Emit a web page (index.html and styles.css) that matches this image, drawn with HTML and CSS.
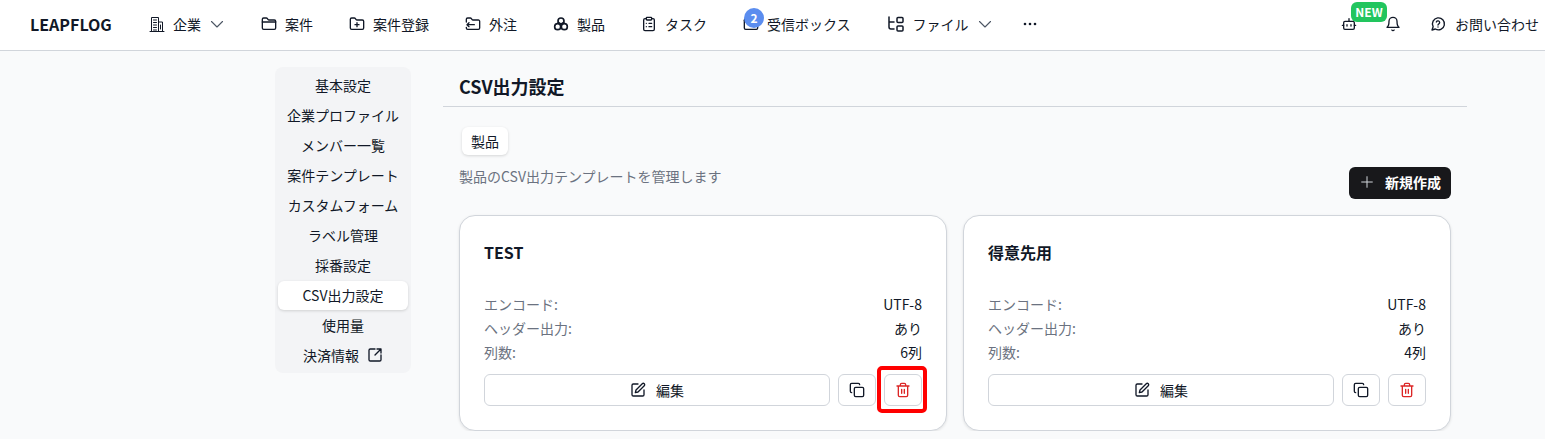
FILE: index.html
```html
<!DOCTYPE html>
<html lang="ja">
<head>
    <meta charset="UTF-8">
    <title>CSV出力設定</title>
    <link rel="stylesheet" href="styles.css">
</head>
<body>
    <header class="topbar">
        <div class="logo">LEAPFLOG</div>
        <nav class="nav">
            <a class="nav-item">
                <svg class="icon thin" viewBox="0 0 16 16"><path d="M1 15.500h14M2.500 15.500V1.500h7v14M9.500 6h4v9.500M4.500 4h3M4.500 6.500h3M4.500 9h3M4.500 11.500h3M4.500 14h3M11.500 9v4"/></svg>
                <span>企業</span>
                <svg class="icon chevron" viewBox="0 0 16 16"><path d="M2.500 5.500 8 11l5.500-5.500"/></svg>
            </a>
            <a class="nav-item">
                <svg class="icon" viewBox="0 0 24 24"><path d="M20 20a2 2 0 0 0 2-2V8a2 2 0 0 0-2-2h-7.900a2 2 0 0 1-1.700-.9l-.8-1.200A2 2 0 0 0 7.900 3H4a2 2 0 0 0-2 2v13a2 2 0 0 0 2 2Z"/><path d="M2 9h20"/></svg>
                <span>案件</span>
            </a>
            <a class="nav-item">
                <svg class="icon" viewBox="0 0 24 24"><path d="M20 20a2 2 0 0 0 2-2V8a2 2 0 0 0-2-2h-7.900a2 2 0 0 1-1.700-.9l-.8-1.200A2 2 0 0 0 7.900 3H4a2 2 0 0 0-2 2v13a2 2 0 0 0 2 2Z"/><path d="M12 10v6M9 13h6"/></svg>
                <span>案件登録</span>
            </a>
            <a class="nav-item">
                <svg class="icon" viewBox="0 0 24 24"><path d="M2 9V5a2 2 0 0 1 2-2h3.900a2 2 0 0 1 1.700.9l.8 1.200a2 2 0 0 0 1.700.9H20a2 2 0 0 1 2 2v10a2 2 0 0 1-2 2H4a2 2 0 0 1-2-2v-1"/><path d="M14 13H3M6 10l-3 3 3 3"/></svg>
                <span>外注</span>
            </a>
            <a class="nav-item">
                <svg class="icon heavy" viewBox="0 0 24 24"><circle cx="12" cy="7.500" r="4.500"/><circle cx="7" cy="16" r="4.500"/><circle cx="17" cy="16" r="4.500"/><path d="M12 12v4M8 10l4 2 4-2"/></svg>
                <span>製品</span>
            </a>
            <a class="nav-item">
                <svg class="icon" viewBox="0 0 24 24"><rect x="8" y="2" width="8" height="4" rx="1"/><path d="M16 4h2a2 2 0 0 1 2 2v14a2 2 0 0 1-2 2H6a2 2 0 0 1-2-2V6a2 2 0 0 1 2-2h2M12 11h4M12 16h4M8 11h.010M8 16h.010"/></svg>
                <span>タスク</span>
            </a>
            <a class="nav-item inbox">
                <svg class="icon" viewBox="0 0 24 24"><rect x="2" y="4" width="20" height="16" rx="2"/><path d="m22 7-8.970 5.700a1.940 1.940 0 0 1-2.060 0L2 7"/></svg>
                <span>受信ボックス</span>
                <span class="count">2</span>
            </a>
            <a class="nav-item file-item">
                <svg class="icon file-icon" viewBox="0 0 18 16"><path d="M2 1v10a2 2 0 0 0 2 2h3M2 6h5"/><path d="M11 1.500h4a1 1 0 0 1 1 1v3a1 1 0 0 1-1 1h-4a1 1 0 0 1-1-1v-3a1 1 0 0 1 1-1ZM11 10h4a1 1 0 0 1 1 1v3a1 1 0 0 1-1 1h-4a1 1 0 0 1-1-1v-3a1 1 0 0 1 1-1Z"/></svg>
                <span>ファイル</span>
                <svg class="icon chevron" viewBox="0 0 16 16"><path d="M2.500 5.500 8 11l5.500-5.500"/></svg>
            </a>
            <a class="nav-item more">
                <svg class="icon" viewBox="0 0 16 16"><circle class="dot" cx="3" cy="8" r="1.300"/><circle class="dot" cx="8" cy="8" r="1.300"/><circle class="dot" cx="13" cy="8" r="1.300"/></svg>
            </a>
        </nav>
        <div class="top-right">
            <a class="bot">
                <svg class="icon" viewBox="0 0 24 24"><path d="M12 8V4"/><rect x="4" y="8" width="16" height="12" rx="2"/><path d="M2 14h2M20 14h2M15 13v2M9 13v2"/></svg>
                <span class="new-badge">NEW</span>
            </a>
            <a class="bell">
                <svg class="icon" viewBox="0 0 24 24"><path d="M10.300 21a1.940 1.940 0 0 0 3.400 0"/><path d="M6 8a6 6 0 0 1 12 0c0 7 3 9 3 9H3s3-2 3-9"/></svg>
            </a>
            <a class="help">
                <svg class="icon" viewBox="0 0 24 24"><path d="M3 21l1.700-5A9 9 0 1 1 8 19.500Z"/><path d="M9.500 9a2.600 2.600 0 0 1 5 .9c0 1.700-2.500 2.400-2.500 3.600M12 16.500h.010"/></svg>
                <span>お問い合わせ</span>
            </a>
        </div>
    </header>

    <div class="page">
        <aside class="sidebar">
            <a class="side-item">基本設定</a>
            <a class="side-item">企業プロファイル</a>
            <a class="side-item">メンバー一覧</a>
            <a class="side-item">案件テンプレート</a>
            <a class="side-item">カスタムフォーム</a>
            <a class="side-item">ラベル管理</a>
            <a class="side-item">採番設定</a>
            <a class="side-item active">CSV出力設定</a>
            <a class="side-item">使用量</a>
            <a class="side-item">決済情報
                <svg class="icon" viewBox="0 0 24 24"><path d="M12 3H5a2 2 0 0 0-2 2v14a2 2 0 0 0 2 2h14a2 2 0 0 0 2-2v-7"/><path d="M21 9V3h-6M21 3l-9 9"/></svg>
            </a>
        </aside>

        <main class="main">
            <h1 class="page-title">CSV出力設定</h1>
            <div class="content">
                <div class="tabs"><button class="tab">製品</button></div>
                <div class="toolbar">
                    <p class="desc">製品のCSV出力テンプレートを管理します</p>
                    <button class="btn-new">
                        <svg class="icon" viewBox="0 0 24 24"><path d="M12 4v16M4 12h16"/></svg>
                        新規作成
                    </button>
                </div>
                <div class="cards">
                    <section class="card">
                        <h2>TEST</h2>
                        <dl class="rows">
                            <div class="row"><dt>エンコード:</dt><dd>UTF-8</dd></div>
                            <div class="row"><dt>ヘッダー出力:</dt><dd>あり</dd></div>
                            <div class="row"><dt>列数:</dt><dd>6列</dd></div>
                        </dl>
                        <div class="actions">
                            <button class="btn btn-edit">
                                <svg class="icon" viewBox="0 0 24 24"><path d="M12 3H5a2 2 0 0 0-2 2v14a2 2 0 0 0 2 2h14a2 2 0 0 0 2-2v-7"/><path d="M18.400 2.600a2.100 2.100 0 1 1 3 3L12 15l-4 1 1-4Z"/></svg>
                                編集
                            </button>
                            <button class="btn btn-icon">
                                <svg class="icon" viewBox="0 0 24 24"><rect x="8" y="8" width="14" height="14" rx="2"/><path d="M4 16c-1.100 0-2-.9-2-2V4c0-1.100.9-2 2-2h10c1.100 0 2 .9 2 2"/></svg>
                            </button>
                            <button class="btn btn-icon danger marked">
                                <svg class="icon" viewBox="0 0 24 24"><path d="M3 6h18M19 6v14a2 2 0 0 1-2 2H7a2 2 0 0 1-2-2V6M8 6V4a2 2 0 0 1 2-2h4a2 2 0 0 1 2 2v2M10 11v6M14 11v6"/></svg>
                            </button>
                        </div>
                    </section>
                    <section class="card">
                        <h2>得意先用</h2>
                        <dl class="rows">
                            <div class="row"><dt>エンコード:</dt><dd>UTF-8</dd></div>
                            <div class="row"><dt>ヘッダー出力:</dt><dd>あり</dd></div>
                            <div class="row"><dt>列数:</dt><dd>4列</dd></div>
                        </dl>
                        <div class="actions">
                            <button class="btn btn-edit">
                                <svg class="icon" viewBox="0 0 24 24"><path d="M12 3H5a2 2 0 0 0-2 2v14a2 2 0 0 0 2 2h14a2 2 0 0 0 2-2v-7"/><path d="M18.400 2.600a2.100 2.100 0 1 1 3 3L12 15l-4 1 1-4Z"/></svg>
                                編集
                            </button>
                            <button class="btn btn-icon">
                                <svg class="icon" viewBox="0 0 24 24"><rect x="8" y="8" width="14" height="14" rx="2"/><path d="M4 16c-1.100 0-2-.9-2-2V4c0-1.100.9-2 2-2h10c1.100 0 2 .9 2 2"/></svg>
                            </button>
                            <button class="btn btn-icon danger">
                                <svg class="icon" viewBox="0 0 24 24"><path d="M3 6h18M19 6v14a2 2 0 0 1-2 2H7a2 2 0 0 1-2-2V6M8 6V4a2 2 0 0 1 2-2h4a2 2 0 0 1 2 2v2M10 11v6M14 11v6"/></svg>
                            </button>
                        </div>
                    </section>
                </div>
            </div>
        </main>
    </div>
</body>
</html>
```

FILE: styles.css
```css
/* Reset */
* {
    margin: 0;
    padding: 0;
    box-sizing: border-box;
}

body {
    font-family: "Noto Sans CJK JP", "Noto Sans", sans-serif;
    font-size: 14px;
    line-height: 20px;
    background: #f9fafb;
    color: #111827;
    overflow: hidden;
}

button {
    font: inherit;
    color: inherit;
    background: none;
    border: none;
}

/* Icons */
.icon {
    width: 16px;
    height: 16px;
    flex: none;
    fill: none;
    stroke: currentColor;
    stroke-width: 2;
    stroke-linecap: round;
    stroke-linejoin: round;
}

.icon.thin {
    stroke-width: 1;
}

.icon.heavy {
    stroke-width: 2.500;
}

.icon.chevron {
    stroke-width: 1.100;
    color: #4b5563;
}

.icon .dot {
    fill: currentColor;
    stroke: none;
}

/* Top bar */
.topbar {
    display: flex;
    align-items: center;
    height: 51px;
    padding: 0 6px 3px 30px;
    background: #fff;
    border-bottom: 1px solid #d1d5db;
}

.logo {
    font-weight: 700;
    font-size: 16px;
    width: 119px;
}

.nav {
    display: flex;
    align-items: center;
    gap: 36px;
}

.nav-item {
    position: relative;
    display: flex;
    align-items: center;
    gap: 8px;
    white-space: nowrap;
}

.count {
    position: absolute;
    left: 1px;
    top: -6px;
    width: 20px;
    height: 20px;
    border-radius: 50%;
    background: #5b8def;
    color: #fff;
    font-size: 12px;
    font-weight: 700;
    line-height: 20px;
    text-align: center;
}

.file-icon {
    width: 18px;
    stroke-width: 1.500;
}

.more {
    margin-left: -7px;
}

.top-right {
    display: flex;
    align-items: center;
    margin-left: auto;
}

.bot {
    position: relative;
    display: flex;
}

.new-badge {
    position: absolute;
    left: 10px;
    top: -14px;
    width: 36px;
    height: 20px;
    border-radius: 6px;
    background: #22c55e;
    color: #fff;
    font-size: 12px;
    font-weight: 700;
    line-height: 20px;
    text-align: center;
}

.bell {
    display: flex;
    margin-left: 28px;
}

.help {
    display: flex;
    align-items: center;
    gap: 9px;
    margin-left: 29px;
}

/* Page layout */
.page {
    display: flex;
    align-items: flex-start;
    gap: 32px;
    padding: 16px 78px 0 275px;
}

.sidebar {
    display: flex;
    flex-direction: column;
    flex: none;
    gap: 1px;
    width: 136px;
    padding: 4px 3px 3px;
    background: #f3f4f6;
    border-radius: 8px;
}

.side-item {
    display: flex;
    align-items: center;
    justify-content: center;
    gap: 8px;
    height: 29px;
    padding-bottom: 2px;
    border-radius: 6px;
    white-space: nowrap;
}

.side-item.active {
    background: #fff;
    box-shadow: 0 1px 3px rgba(0, 0, 0, 0.15);
}

.main {
    flex: 1;
    min-width: 0;
}

.page-title {
    height: 40px;
    padding: 7px 16px 0;
    font-size: 18px;
    font-weight: 700;
    line-height: 24px;
    border-bottom: 1px solid #d1d5db;
}

.content {
    padding: 20px 16px 0;
}

.tabs {
    display: flex;
    padding-left: 3px;
}

.tab {
    height: 28px;
    padding: 0 9px 1px;
    background: #fff;
    border-radius: 6px;
    box-shadow: 0 1px 3px rgba(0, 0, 0, 0.15);
}

.toolbar {
    display: flex;
    justify-content: space-between;
    align-items: flex-start;
    margin-top: 12px;
}

.desc {
    margin-top: -1px;
    color: #6b7280;
}

.btn-new {
    display: flex;
    align-items: center;
    gap: 10px;
    height: 32px;
    padding: 0 10px 2px;
    border-radius: 6px;
    background: #18181b;
    color: #fff;
    font-weight: 700;
}

.btn-new .icon {
    color: #d1d5db;
    stroke-width: 1.500;
}

/* Cards */
.cards {
    display: grid;
    grid-template-columns: 1fr 1fr;
    gap: 16px;
    margin-top: 16px;
}

.card {
    height: 216px;
    padding: 24px;
    background: #fff;
    border: 1px solid #d1d5db;
    border-radius: 16px;
    box-shadow: 0 1px 3px rgba(0, 0, 0, 0.1);
}

.card h2 {
    font-size: 16px;
    font-weight: 700;
    line-height: 24px;
}

.rows {
    margin-top: 28px;
}

.row {
    display: flex;
    justify-content: space-between;
    height: 24px;
    line-height: 24px;
}

.row dt {
    color: #6b7280;
}

.actions {
    display: flex;
    gap: 8px;
    margin-top: 10px;
}

.btn {
    display: flex;
    align-items: center;
    justify-content: center;
    height: 32px;
    background: #fff;
    border: 1px solid #d1d5db;
    border-radius: 6px;
}

.btn-edit {
    flex: 1;
    gap: 10px;
}

.btn-icon {
    flex: none;
    width: 38px;
}

.danger {
    color: #dc2626;
}

/* red annotation drawn over the delete button */
.marked {
    position: relative;
}

.marked::after {
    content: "";
    position: absolute;
    left: -8px;
    right: -6px;
    top: -9px;
    bottom: -8px;
    border: 4px solid #ff0000;
    border-radius: 5px;
}
```
